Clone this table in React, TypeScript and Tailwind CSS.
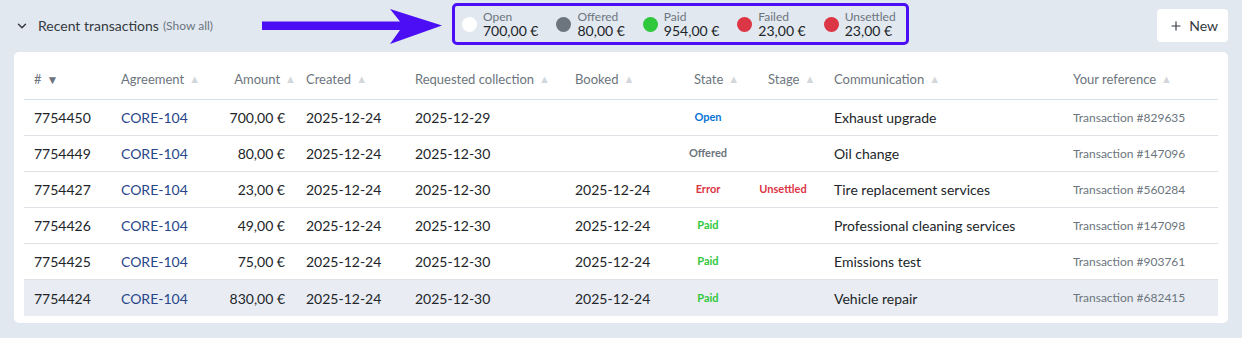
import { ChevronDown, Plus } from "lucide-react";

type Tx = {
  id: string;
  created: string;
  amount: string;
  requested: string;
  booked: string;
  state: "Open" | "Offered" | "Error" | "Paid";
  stage?: string;
  communication: string;
  reference: string;
};

const rows: Tx[] = [
  { id: "7754450", amount: "700,00 €", created: "2025-12-24", requested: "2025-12-29", booked: "", state: "Open", communication: "Exhaust upgrade", reference: "Transaction #829635" },
  { id: "7754449", amount: "80,00 €", created: "2025-12-24", requested: "2025-12-30", booked: "", state: "Offered", communication: "Oil change", reference: "Transaction #147096" },
  { id: "7754427", amount: "23,00 €", created: "2025-12-24", requested: "2025-12-30", booked: "2025-12-24", state: "Error", stage: "Unsettled", communication: "Tire replacement services", reference: "Transaction #560284" },
  { id: "7754426", amount: "49,00 €", created: "2025-12-24", requested: "2025-12-30", booked: "2025-12-24", state: "Paid", communication: "Professional cleaning services", reference: "Transaction #147098" },
  { id: "7754425", amount: "75,00 €", created: "2025-12-24", requested: "2025-12-30", booked: "2025-12-24", state: "Paid", communication: "Emissions test", reference: "Transaction #903761" },
  { id: "7754424", amount: "830,00 €", created: "2025-12-24", requested: "2025-12-30", booked: "2025-12-24", state: "Paid", communication: "Vehicle repair", reference: "Transaction #682415" },
];

const stateColor: Record<Tx["state"], string> = {
  Open: "text-[#0b74d6]",
  Offered: "text-[#6c757d]",
  Error: "text-[#dc3545]",
  Paid: "text-[#2fc83c]",
};

const legend = [
  { label: "Open", value: "700,00 €", dot: "bg-white" },
  { label: "Offered", value: "80,00 €", dot: "bg-[#6c757d]" },
  { label: "Paid", value: "954,00 €", dot: "bg-[#2fc83c]" },
  { label: "Failed", value: "23,00 €", dot: "bg-[#dc3545]" },
  { label: "Unsettled", value: "23,00 €", dot: "bg-[#dc3545]" },
];

const grid =
  "grid grid-cols-[87px_97px_88px_109px_160px_119px_74px_66px_239px_1fr]";

function SortUp() {
  return <span className="ml-[5px] text-[11px] text-[#d3d7dc]">▲</span>;
}

function HeadCell({ label, className = "" }: { label: string; className?: string }) {
  return (
    <div className={`flex items-center whitespace-nowrap ${className}`}>
      {label}
      <SortUp />
    </div>
  );
}

export default function App() {
  return (
    <div className="h-[338px] w-[1242px] overflow-hidden bg-[#e2e8f0] font-['Segoe_UI','Lato',sans-serif] text-[#212529]">
      <div className="flex h-[52px] items-start pl-[17px] pr-[14px]">
        <div className="mt-[15px] flex w-[245px] shrink-0 items-center whitespace-nowrap">
          <ChevronDown className="h-[14px] w-[14px] -ml-[2px] text-[#343a40]" strokeWidth={2.5} />
          <span className="ml-[9px] text-[14px] text-[#343a40]">Recent transactions</span>
          <span className="ml-[4px] text-[12px] text-[#6c757d]">(Show all)</span>
        </div>
        <svg width="184" height="40" viewBox="0 0 184 40" className="mt-[6px] shrink-0">
          <path
            d="M0 15.5 L138 15.5 L128 3 L180 19.5 L128 38 L138 24 L0 24 Z"
            fill="#4c0ff5"
          />
        </svg>
        <div className="ml-[6px] mt-[3px] flex h-[42px] w-[457px] shrink-0 items-center gap-[18px] whitespace-nowrap rounded-[5px] border-[3px] border-[#4c0ff5] pl-[7px]">
          {legend.map((l) => (
            <div key={l.label} className="flex items-center gap-[6px]">
              <span className={`h-[15px] w-[15px] rounded-full ${l.dot}`} />
              <div className="flex flex-col">
                <span className="text-[12px] leading-[13px] text-[#6c757d]">{l.label}</span>
                <span className="text-[14px] leading-[15px] text-[#212529]">{l.value}</span>
              </div>
            </div>
          ))}
        </div>
        <button className="ml-auto mt-[9px] flex h-[33px] items-center gap-[6px] rounded-[4px] bg-white pl-[12px] pr-[10px] text-[14px] text-[#343a40]">
          <Plus className="h-[14px] w-[14px]" strokeWidth={2} />
          New
        </button>
      </div>

      <div className="mx-[14px] rounded-[5px] bg-white px-[10px] pb-[7px] pt-[10px]">
        <div className={`${grid} h-[38px] items-center border-b border-[#cfe0ee] pb-[2px] text-[13px] text-[#6c757d]`}>
          <div className="flex items-center pl-[10px]">
            #<span className="ml-[5px] text-[12px] text-[#6c757d]">▼</span>
          </div>
          <HeadCell label="Agreement" className="pl-[10px]" />
          <HeadCell label="Amount" className="justify-end" />
          <HeadCell label="Created" className="pl-[10px]" />
          <HeadCell label="Requested collection" className="pl-[10px]" />
          <HeadCell label="Booked" className="pl-[10px]" />
          <HeadCell label="State" className="pl-[10px]" />
          <HeadCell label="Stage" className="pl-[10px]" />
          <HeadCell label="Communication" className="pl-[10px]" />
          <HeadCell label="Your reference" className="pl-[10px]" />
        </div>
        {rows.map((r, i) => (
          <div
            key={r.id}
            className={`${grid} h-[36px] items-center text-[14px] ${
              i === rows.length - 1 ? "bg-[#e9edf3]" : "border-b border-[#dee2e6]"
            }`}
          >
            <div className="pl-[10px]">{r.id}</div>
            <div className="pl-[10px] text-[#28478a]">CORE-104</div>
            <div className="pr-[11px] text-right">{r.amount}</div>
            <div className="pl-[10px]">{r.created}</div>
            <div className="pl-[10px]">{r.requested}</div>
            <div className="pl-[10px]">{r.booked}</div>
            <div className={`pr-[26px] text-center text-[11px] font-bold ${stateColor[r.state]}`}>{r.state}</div>
            <div className="pr-[16px] text-center text-[11px] font-bold text-[#dc3545]">{r.stage ?? ""}</div>
            <div className="pl-[10px]">{r.communication}</div>
            <div className="pl-[10px] text-[12px] text-[#6c757d]">{r.reference}</div>
          </div>
        ))}
      </div>
    </div>
  );
}
